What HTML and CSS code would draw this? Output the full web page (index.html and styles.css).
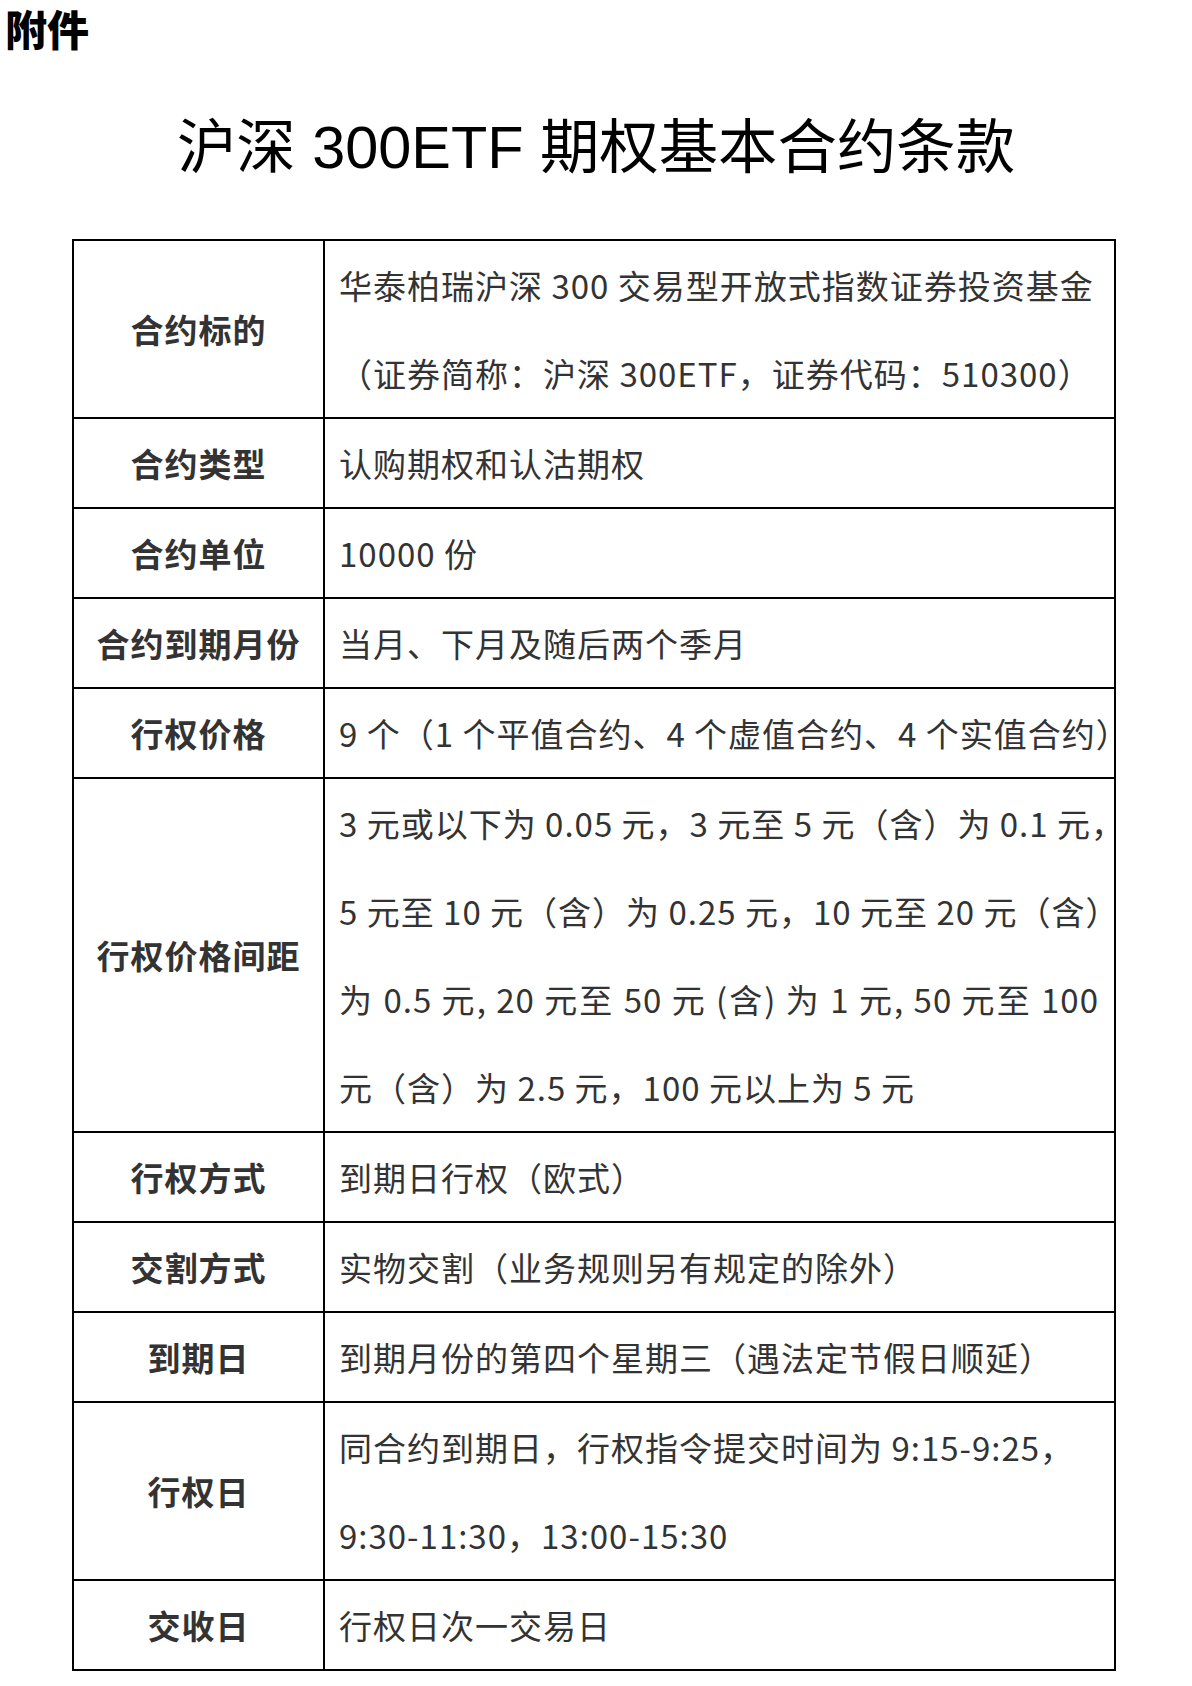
FILE: index.html
```html
<!DOCTYPE html>
<html lang="zh-CN">
<head>
<meta charset="utf-8">
<title>沪深300ETF期权基本合约条款</title>
<link rel="stylesheet" href="styles.css">
</head>
<body>
<div class="attach">附件</div>
<h1 class="title">沪深 300ETF 期权基本合约条款</h1>
<table class="terms">
  <colgroup><col class="col-label"><col class="col-value"></colgroup>
  <tbody>
    <tr><th>合约标的</th><td>华泰柏瑞沪深 300 交易型开放式指数证券投资基金<br>（证券简称：沪深 300ETF，证券代码：510300）</td></tr>
    <tr><th>合约类型</th><td>认购期权和认沽期权</td></tr>
    <tr><th>合约单位</th><td>10000 份</td></tr>
    <tr><th>合约到期月份</th><td>当月、下月及随后两个季月</td></tr>
    <tr><th>行权价格</th><td>9 个（1 个平值合约、4 个虚值合约、4 个实值合约）</td></tr>
    <tr><th>行权价格间距</th><td>3 元或以下为 0.05 元，3 元至 5 元（含）为 0.1 元，<br>5 元至 10 元（含）为 0.25 元，10 元至 20 元（含）<span class="just">为 0.5 元, 20 元至 50 元 (含) 为 1 元, 50 元至 100</span>元（含）为 2.5 元，100 元以上为 5 元</td></tr>
    <tr><th>行权方式</th><td>到期日行权（欧式）</td></tr>
    <tr><th>交割方式</th><td>实物交割（业务规则另有规定的除外）</td></tr>
    <tr><th>到期日</th><td>到期月份的第四个星期三（遇法定节假日顺延）</td></tr>
    <tr><th>行权日</th><td>同合约到期日，行权指令提交时间为 9:15-9:25，<br>9:30-11:30，13:00-15:30</td></tr>
    <tr><th>交收日</th><td>行权日次一交易日</td></tr>
  </tbody>
</table>
</body>
</html>
```

FILE: styles.css
```css
html, body {
  margin: 0;
  padding: 0;
  background: #ffffff;
}

body {
  font-family: "Noto Sans CJK SC", "Noto Sans", sans-serif;
  color: #000;
}

.attach {
  font-size: 42px;
  font-weight: 900;
  line-height: 56px;
  padding-left: 5px;
}

.title {
  margin: 52px 0 0 0;
  font-family: "Liberation Sans", "Noto Sans CJK SC", sans-serif;
  font-size: 59.4px;
  font-weight: 400;
  line-height: 80px;
  text-align: center;
}

.terms {
  margin: 51px 0 0 72px;
  width: 1044px;
  border-collapse: collapse;
  table-layout: fixed;
}

.col-label { width: 251px; }

.terms th,
.terms td {
  border: 2px solid #000;
  padding: 0;
  line-height: 88px;
  font-size: 33px;
  letter-spacing: 1px;
  color: #333;
  vertical-align: middle;
}

.terms th {
  font-weight: 700;
  text-align: center;
}

.terms td {
  text-align: left;
  padding-left: 14px;
  white-space: nowrap;
}

.terms .just {
  display: block;
  width: 760px;
  white-space: normal;
  text-align: justify;
  text-align-last: justify;
}
```
